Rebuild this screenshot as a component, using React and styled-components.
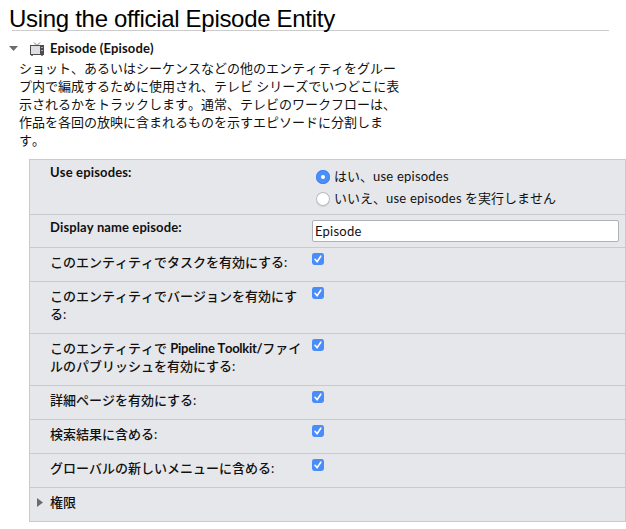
import React from "react";
import styled, { createGlobalStyle } from "styled-components";

const GlobalStyle = createGlobalStyle`
  * { box-sizing: border-box; }
  body {
    margin: 0;
    background: #fff;
    color: #111;
    font: 13px/18px Lato, "Noto Sans CJK JP", sans-serif;
    font-kerning: none;
    font-feature-settings: "liga" 0;
  }
`;

const Page = styled.main`
  width: 626px;
  height: 529px;
  overflow: hidden;
`;

const Title = styled.h1`
  margin: 0 17px 0 12px;
  height: 31px;
  padding-top: 5px;
  border-bottom: 1px solid #ccc;
  font: 400 24px/28px "Liberation Sans", Arial, sans-serif;
  letter-spacing: -0.3px;
  text-indent: -3px;
  color: #000;
  white-space: nowrap;
`;

const EntityHeader = styled.header`
  display: flex;
  align-items: center;
  height: 18px;
  margin: 8px 0 0 9px;
`;

const Arrow = styled.svg`
  display: block;
  flex: none;
  fill: #6c6c6c;
`;

const TvIcon = styled.svg`
  display: block;
  flex: none;
  margin: 1px 5px 0 12px;
`;

const Latin = styled.span`
  font-family: Lato, sans-serif;
  font-weight: ${(p) => (p.$bold ? 700 : 400)};
  letter-spacing: ${(p) => p.$spacing || 0}px;
`;

const Description = styled.p`
  margin: 2px 0 0 19px;
  white-space: nowrap;
`;

const Panel = styled.section`
  width: 597px;
  margin: 10px 0 0 29px;
  border: 1px solid #c9cacf;
  background: #e6e7eb;
`;

const Row = styled.div`
  display: grid;
  grid-template-columns: 282px 1fr;
  height: ${(p) => p.$height}px;
  border-bottom: 1px solid #c9cacf;
  &:last-child { border-bottom: 0; }
`;

const Label = styled.div`
  padding: ${(p) => p.$top ?? 5}px 0 0 20px;
  font-weight: 500;
  white-space: nowrap;
`;

const RadioList = styled.div`
  padding: 5px 0 0 4px;
`;

const RadioOption = styled.label`
  display: flex;
  align-items: center;
  gap: 4px;
  height: 22px;
  white-space: nowrap;
`;

const Radio = styled.span`
  display: grid;
  place-items: center;
  width: 14px;
  height: 14px;
  margin-top: 1px;
  border-radius: 50%;
  background: ${(p) => (p.$on ? "#4a8ff8" : "#fff")};
  box-shadow: ${(p) => (p.$on ? "inset 0 0 0 1px #4384f3" : "inset 0 0 0 1px #b7b7bb, 0 1px 0 #d2d3d7")};
  &::after {
    content: "";
    width: 4px;
    height: 4px;
    border-radius: 50%;
    background: #fff;
  }
`;

const TextField = styled.input`
  width: 307px;
  height: 22px;
  margin-top: 5px;
  padding: 0 3px 1px 2px;
  border: 1px solid #b0b1b6;
  border-radius: 2px;
  outline: 0;
  background: #fff;
  color: #111;
  font: 13px/18px Lato, sans-serif;
  letter-spacing: 0.25px;
`;

const CheckMark = styled.svg`
  display: block;
  margin-top: 5px;
`;

const Disclosure = styled.div`
  display: flex;
  align-items: center;
  gap: 7px;
  height: 18px;
  margin: 5px 0 0 7px;
  font-weight: 500;
`;

const Check = () => (
  <CheckMark width="12" height="12" viewBox="0 0 12 12" role="img" aria-label="checked">
    <rect width="12" height="12" rx="2.4" fill="#4a8df8" />
    <path d="M3 6.3 5.1 8.6 8.8 3.2" fill="none" stroke="#fff" strokeWidth="1.6" strokeLinecap="round" />
  </CheckMark>
);

const settings = [
  { height: 34, label: "このエンティティでタスクを有効にする:" },
  { height: 52, label: <>このエンティティでバージョンを有効にす<br />る:</> },
  {
    height: 52,
    label: <>このエンティティで <Latin $bold $spacing={-0.28}>Pipeline Toolkit/</Latin>ファイ<br />ルのパブリッシュを有効にする:</>,
  },
  { height: 34, label: "詳細ページを有効にする:" },
  { height: 34, label: "検索結果に含める:" },
  { height: 34, label: "グローバルの新しいメニューに含める:" },
];

export default function App() {
  return (
    <Page lang="ja">
      <GlobalStyle />
      <Title>Using the official Episode Entity</Title>
      <EntityHeader>
        <Arrow width="9" height="5" viewBox="0 0 9 5"><path d="M0 0H9L4.5 5Z" /></Arrow>
        <TvIcon width="15" height="14" viewBox="0 0 15 14">
          <path d="M4 0.5 7 3.5 10 0.5" fill="none" stroke="#77787b" />
          <rect x="0" y="3" width="14" height="10" fill="#4d4d50" />
          <rect x="1" y="4" width="9" height="8" fill="#dedfe2" />
          <path d="M11 5.5H13M11 8.5H13" stroke="#a9a9ad" />
          <path d="M1 13.5H3M11 13.5H13" stroke="#77787b" />
        </TvIcon>
        <Latin $bold $spacing={0.12}>Episode (Episode)</Latin>
      </EntityHeader>
      <Description>
        ショット、あるいはシーケンスなどの他のエンティティをグルー<br />
        プ内で編成するために使用され、テレビ シリーズでいつどこに表<br />
        示されるかをトラックします。通常、テレビのワークフローは、<br />
        作品を各回の放映に含まれるものを示すエピソードに分割しま<br />
        す。
      </Description>
      <Panel>
        <Row $height={55}>
          <Label $top={3}><Latin $bold $spacing={0.15}>Use episodes:</Latin></Label>
          <RadioList>
            <RadioOption><Radio $on /><span>はい、<Latin $spacing={0.22}>use episodes</Latin></span></RadioOption>
            <RadioOption><Radio /><span>いいえ、<Latin $spacing={0.22}>use episodes</Latin> を実行しません</span></RadioOption>
          </RadioList>
        </Row>
        <Row $height={33}>
          <Label $top={3}><Latin $bold $spacing={0.1}>Display name episode:</Latin></Label>
          <TextField defaultValue="Episode" aria-label="Display name episode" />
        </Row>
        {settings.map((item, index) => (
          <Row key={index} $height={item.height}>
            <Label>{item.label}</Label>
            <Check />
          </Row>
        ))}
        <Row $height={33}>
          <Disclosure>
            <Arrow width="6" height="9" viewBox="0 0 6 9"><path d="M0 0V9L6 4.5Z" /></Arrow>
            <span>権限</span>
          </Disclosure>
        </Row>
      </Panel>
    </Page>
  );
}
